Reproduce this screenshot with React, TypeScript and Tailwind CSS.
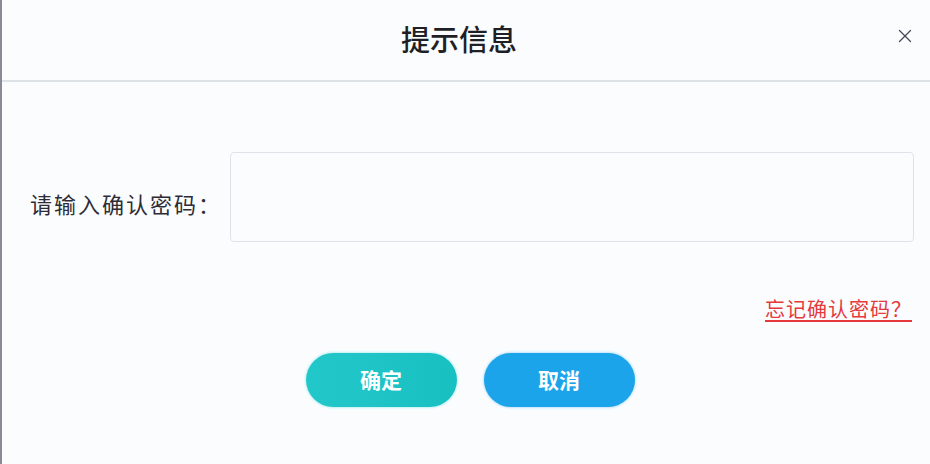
import { X } from "lucide-react";

const font = { fontFamily: '"Noto Sans CJK SC", "Noto Sans", sans-serif' };

export default function App() {
  return (
    <div
      className="w-[930px] h-[464px] bg-[#fbfcfe] border-l-2 border-[#8a8a94] text-[#222]"
      style={font}
    >
      <header className="h-[82px] flex items-center justify-center relative border-b-2 border-[#dde2e7] pr-[14px]">
        <h1 className="text-[29px] font-medium text-[#1f1f26] -mt-[3px]">提示信息</h1>
        <button className="absolute right-[14px] top-[25px] text-[#4a4658]" aria-label="close">
          <X size={22} strokeWidth={1.4} />
        </button>
      </header>

      <div className="pl-[28px] pr-[16px] pt-[70px]">
        <div className="flex items-center">
          <label className="w-[200px] pt-[12px] text-[22px] tracking-[2px] text-[#2e2c36] whitespace-nowrap">请输入确认密码：</label>
          <input className="flex-1 h-[90px] bg-[#fbfcfe] border border-[#dfe3e9] rounded-[4px] outline-none" />
        </div>

        <div className="flex justify-end mt-[52px]">
          <a className="text-[20px] tracking-[1px] text-[#e5393b] underline underline-offset-[3px] decoration-[1.5px] mr-[2px]">
            忘记确认密码？
          </a>
        </div>

        <div className="flex justify-center gap-[27px] mt-[29px] pr-[4px]">
          <button className="w-[151px] h-[54px] rounded-full bg-gradient-to-r from-[#22c7c9] to-[#18c0c2] text-white text-[21px] font-bold shadow-[0_0_3px_#7fe6e8]">
            确定
          </button>
          <button className="w-[151px] h-[54px] rounded-full bg-[#1ba4ea] text-white text-[21px] font-bold shadow-[0_0_3px_#7fcaf2]">
            取消
          </button>
        </div>
      </div>
    </div>
  );
}
